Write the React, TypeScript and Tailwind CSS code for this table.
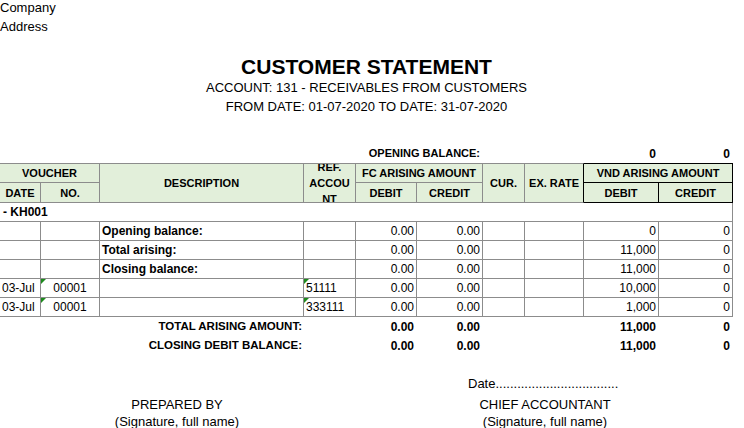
import React from "react";

const cols = [41, 59, 204, 52, 61, 66, 42, 59, 75, 74];

type Line = {
  date?: string;
  no?: string;
  desc?: string;
  ref?: string;
  fcDebit: string;
  fcCredit: string;
  vndDebit: string;
  vndCredit: string;
};

const lines: Line[] = [
  { desc: "Opening balance:", fcDebit: "0.00", fcCredit: "0.00", vndDebit: "0", vndCredit: "0" },
  { desc: "Total arising:", fcDebit: "0.00", fcCredit: "0.00", vndDebit: "11,000", vndCredit: "0" },
  { desc: "Closing balance:", fcDebit: "0.00", fcCredit: "0.00", vndDebit: "11,000", vndCredit: "0" },
  { date: "03-Jul", no: "00001", ref: "51111", fcDebit: "0.00", fcCredit: "0.00", vndDebit: "10,000", vndCredit: "0" },
  { date: "03-Jul", no: "00001", ref: "333111", fcDebit: "0.00", fcCredit: "0.00", vndDebit: "1,000", vndCredit: "0" },
];

const totals = [
  { label: "TOTAL ARISING AMOUNT:", fcDebit: "0.00", fcCredit: "0.00", vndDebit: "11,000", vndCredit: "0" },
  { label: "CLOSING DEBIT BALANCE:", fcDebit: "0.00", fcCredit: "0.00", vndDebit: "11,000", vndCredit: "0" },
];

// little green "number stored as text" flag
function Flag() {
  return (
    <span className="absolute left-0 top-0 w-0 h-0 border-t-[5px] border-t-[#1e8a1e] border-r-[5px] border-r-transparent" />
  );
}

const cell = "border-r border-b border-[#8c8c8c] px-[2px] p-0 leading-[16px] align-middle";
const head = "bg-[#e2efda] border-r border-b border-[#8c8c8c] p-0 text-[11px] font-bold leading-[16px] text-center align-middle";

export default function App() {
  return (
    <div className="w-[744px] h-[428px] overflow-hidden bg-white text-black font-['Liberation_Sans',Arial,sans-serif]">
      <div className="h-[19px] leading-[15px] text-[13px]">Company</div>
      <div className="h-[19px] leading-[15px] text-[13px]">Address</div>

      <div className="w-[733px] text-center">
        <h1 className="mt-[18px] h-[22px] leading-[21px] text-[21px] font-bold">CUSTOMER STATEMENT</h1>
        <p className="h-[19px] leading-[19px] text-[13px]">ACCOUNT: 131 - RECEIVABLES FROM CUSTOMERS</p>
        <p className="h-[19px] leading-[19px] text-[13px]">FROM DATE: 01-07-2020 TO DATE: 31-07-2020</p>
      </div>

      <table className="mt-[28px] w-[733px] table-fixed border-separate border-spacing-0 text-[12px]">
        <colgroup>
          {cols.map((w, i) => (
            <col key={i} style={{ width: w }} />
          ))}
        </colgroup>
        <tbody>
          <tr className="h-[19px]">
            <td colSpan={6} className="p-0 pr-[3px] text-right text-[11px] font-bold">OPENING BALANCE:</td>
            <td />
            <td />
            <td className="p-0 pr-[3px] text-right font-bold">0</td>
            <td className="p-0 pr-[3px] text-right font-bold">0</td>
          </tr>

          <tr className="h-[20px]">
            <th colSpan={2} className={`${head} border-t`}>VOUCHER</th>
            <th rowSpan={2} className={`${head} border-t`}>DESCRIPTION</th>
            <th rowSpan={2} className={`${head} border-t`}>
              <div className="h-[38px] overflow-hidden flex flex-col justify-center">
                <span>REF.</span>
                <span>ACCOU</span>
                <span>NT</span>
              </div>
            </th>
            <th colSpan={2} className={`${head} border-t`}>FC ARISING AMOUNT</th>
            <th rowSpan={2} className={`${head} border-t`}>CUR.</th>
            <th rowSpan={2} className={`${head} border-t border-r-black`}>EX. RATE</th>
            <th colSpan={2} className={`${head} border-t border-t-black border-r-black border-b-black`}>VND ARISING AMOUNT</th>
          </tr>
          <tr className="h-[20px]">
            <th className={head}>DATE</th>
            <th className={head}>NO.</th>
            <th className={head}>DEBIT</th>
            <th className={head}>CREDIT</th>
            <th className={`${head} border-r-black border-b-black`}>DEBIT</th>
            <th className={`${head} border-r-black border-b-black`}>CREDIT</th>
          </tr>

          <tr className="h-[19px]">
            <td colSpan={10} className={`${cell} pl-[3px] font-bold`}>- KH001</td>
          </tr>

          {lines.map((l, i) => (
            <tr key={i} className="h-[19px]">
              <td className={cell}>{l.date}</td>
              <td className={`${cell} relative text-center`}>
                {l.no && <Flag />}
                {l.no}
              </td>
              <td className={`${cell} font-bold`}>{l.desc}</td>
              <td className={`${cell} relative`}>
                {l.ref && <Flag />}
                {l.ref}
              </td>
              <td className={`${cell} text-right`}>{l.fcDebit}</td>
              <td className={`${cell} text-right`}>{l.fcCredit}</td>
              <td className={cell} />
              <td className={cell} />
              <td className={`${cell} text-right`}>{l.vndDebit}</td>
              <td className={`${cell} text-right`}>{l.vndCredit}</td>
            </tr>
          ))}

          {totals.map((t) => (
            <tr key={t.label} className="h-[19px] font-bold">
              <td colSpan={3} className="p-0 pr-[2px] text-right text-[11.5px]">{t.label}</td>
              <td />
              <td className="p-0 pr-[3px] text-right">{t.fcDebit}</td>
              <td className="p-0 pr-[3px] text-right">{t.fcCredit}</td>
              <td />
              <td />
              <td className="p-0 pr-[3px] text-right">{t.vndDebit}</td>
              <td className="p-0 pr-[3px] text-right">{t.vndCredit}</td>
            </tr>
          ))}
        </tbody>
      </table>

      <div className="mt-[19px] flex text-[13px] leading-[19px]">
        <div className="w-[354px] text-center">
          <div className="h-[19px]" />
          <div className="h-[19px] pt-[2px]">PREPARED BY</div>
          <div>(Signature, full name)</div>
        </div>
        <div className="ml-[86px] w-[210px] text-center">
          <div className="h-[19px] pl-[28px] text-left">Date..................................</div>
          <div className="h-[19px] pt-[2px]">CHIEF ACCOUNTANT</div>
          <div>(Signature, full name)</div>
        </div>
      </div>
    </div>
  );
}
